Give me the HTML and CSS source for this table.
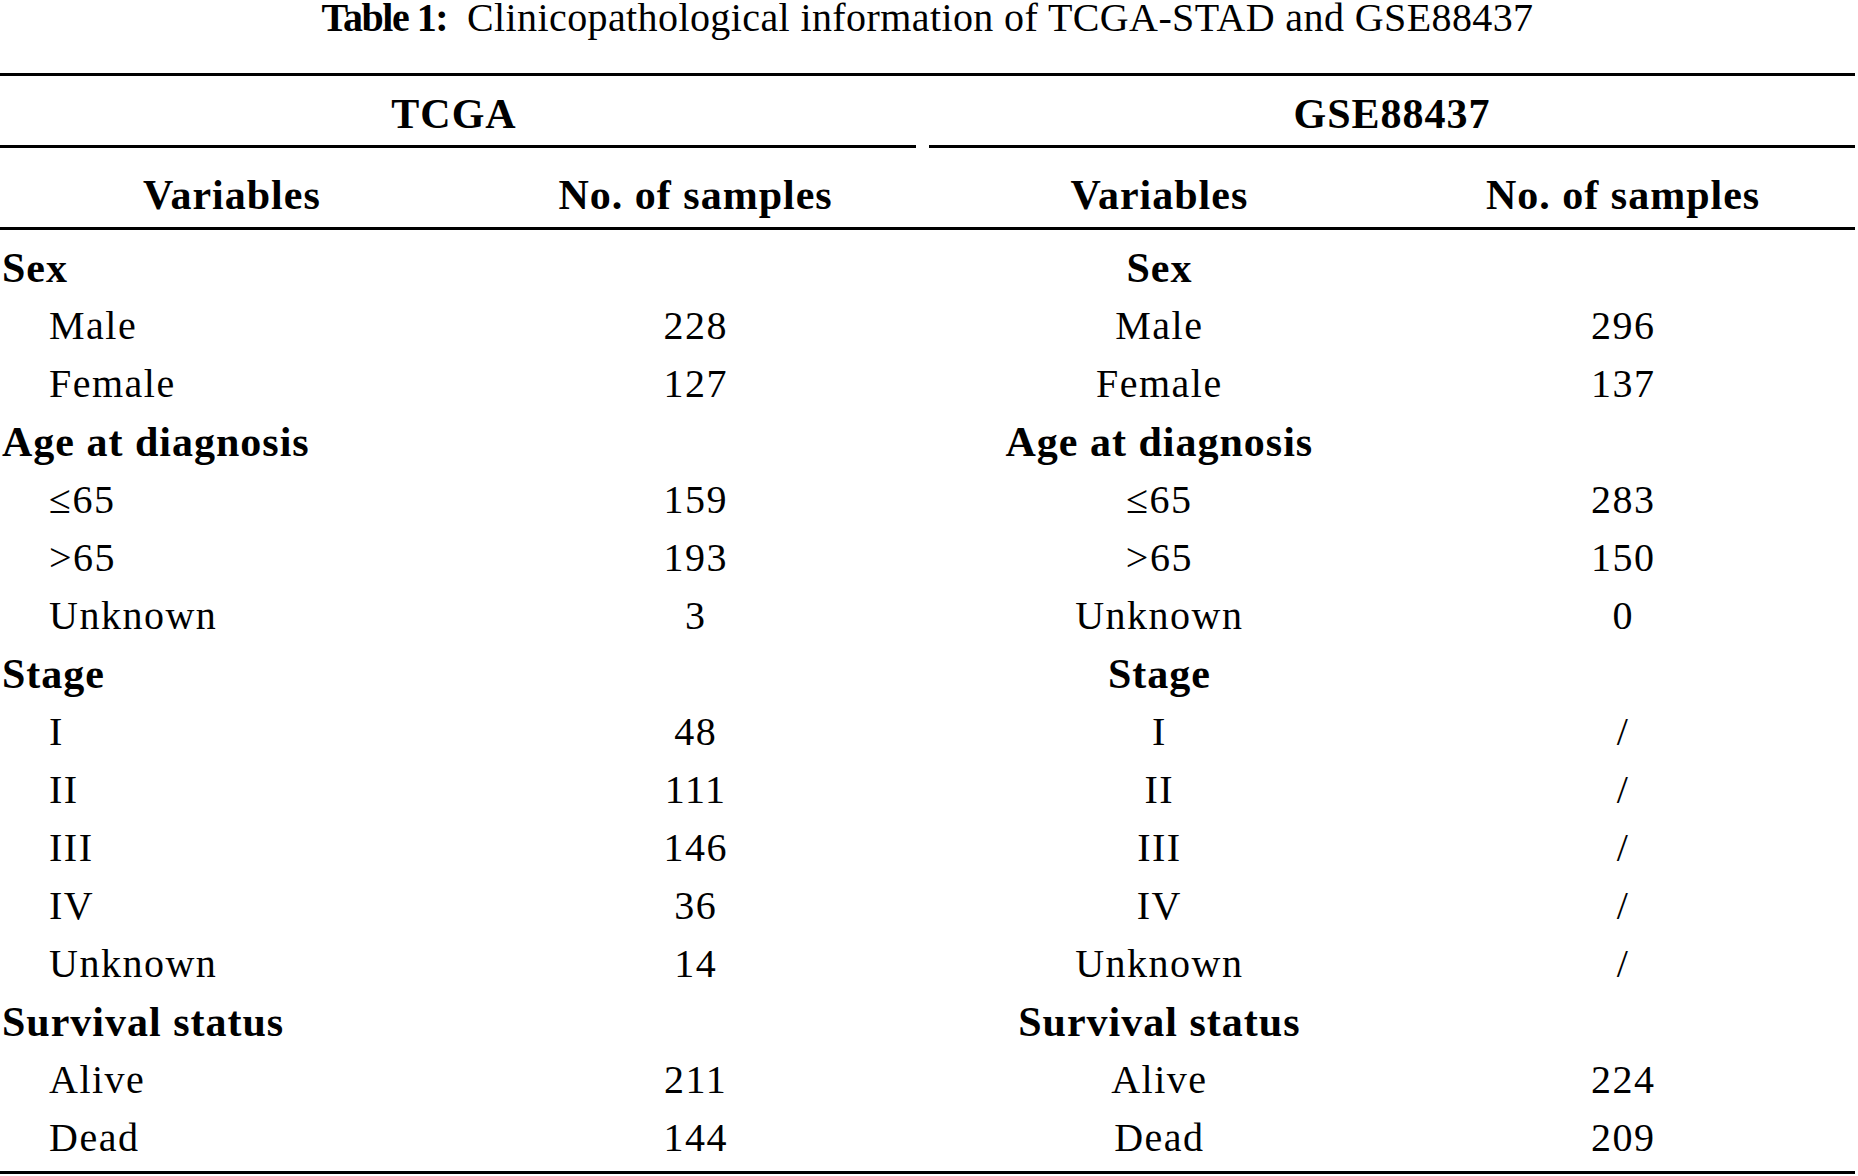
FILE: index.html
```html
<!DOCTYPE html>
<html lang="en">
<head>
<meta charset="utf-8">
<title>Table 1</title>
<link rel="stylesheet" href="styles.css">
</head>
<body>
<div class="page">
  <h1 class="caption"><span class="caption-label">Table 1:</span>Clinicopathological information of TCGA-STAD and GSE88437</h1>
  <div class="table">
    <div class="groups">
      <div class="group group-left">TCGA</div>
      <div class="group group-right">GSE88437</div>
    </div>
    <div class="heads">
      <div class="head">Variables</div>
      <div class="head">No. of samples</div>
      <div class="head">Variables</div>
      <div class="head">No. of samples</div>
    </div>
    <div class="rows">
      <div class="sec">Sex</div><div></div><div class="sec center">Sex</div><div></div>
      <div class="sub">Male</div><div class="num">228</div><div class="center">Male</div><div class="num">296</div>
      <div class="sub">Female</div><div class="num">127</div><div class="center">Female</div><div class="num">137</div>
      <div class="sec">Age at diagnosis</div><div></div><div class="sec center">Age at diagnosis</div><div></div>
      <div class="sub">≤65</div><div class="num">159</div><div class="center">≤65</div><div class="num">283</div>
      <div class="sub">&gt;65</div><div class="num">193</div><div class="center">&gt;65</div><div class="num">150</div>
      <div class="sub">Unknown</div><div class="num">3</div><div class="center">Unknown</div><div class="num">0</div>
      <div class="sec">Stage</div><div></div><div class="sec center">Stage</div><div></div>
      <div class="sub">I</div><div class="num">48</div><div class="center">I</div><div class="num">/</div>
      <div class="sub">II</div><div class="num">111</div><div class="center">II</div><div class="num">/</div>
      <div class="sub">III</div><div class="num">146</div><div class="center">III</div><div class="num">/</div>
      <div class="sub">IV</div><div class="num">36</div><div class="center">IV</div><div class="num">/</div>
      <div class="sub">Unknown</div><div class="num">14</div><div class="center">Unknown</div><div class="num">/</div>
      <div class="sec">Survival status</div><div></div><div class="sec center">Survival status</div><div></div>
      <div class="sub">Alive</div><div class="num">211</div><div class="center">Alive</div><div class="num">224</div>
      <div class="sub">Dead</div><div class="num">144</div><div class="center">Dead</div><div class="num">209</div>
    </div>
  </div>
</div>
</body>
</html>
```

FILE: styles.css
```css
html, body {
  margin: 0;
  padding: 0;
  background: #ffffff;
}

body {
  font-family: "Liberation Serif", "Times New Roman", serif;
  color: #000000;
}

.page {
  width: 1855px;
}

.caption {
  margin: 0 0 38px 0;
  font-size: 40px;
  font-weight: normal;
  line-height: 35px;
  height: 35px;
  text-align: center;
  letter-spacing: 0.4px;
  white-space: nowrap;
}

.caption-label {
  font-weight: bold;
  letter-spacing: -1.5px;
  margin-right: 20px;
}

.table {
  border-top: 3px solid #000;
  font-size: 40px;
  line-height: 58px;
  letter-spacing: 1.5px;
}

.groups {
  display: grid;
  grid-template-columns: 916px 1fr;
  column-gap: 13px;
  padding-top: 9px;
}

.group {
  font-size: 42px;
  font-weight: bold;
  letter-spacing: 1px;
  text-align: center;
  height: 58px;
  padding-bottom: 2px;
  border-bottom: 3px solid #000;
}

.group-left {
  padding-right: 8px;
}

.heads {
  display: grid;
  grid-template-columns: repeat(4, 1fr);
  padding: 18px 0 3px 0;
  border-bottom: 3px solid #000;
}

.head {
  font-size: 42px;
  font-weight: bold;
  letter-spacing: 1px;
  text-align: center;
  height: 58px;
}

.rows {
  display: grid;
  grid-template-columns: repeat(4, 1fr);
  grid-auto-rows: 58px;
  padding: 9px 0 4px 0;
  border-bottom: 3px solid #000;
}

.rows > div {
  white-space: nowrap;
}

.sec {
  font-size: 42px;
  font-weight: bold;
  letter-spacing: 1px;
  padding-left: 2px;
}

.sec.center {
  padding-left: 0;
}

.sub {
  padding-left: 49px;
}

.center,
.num {
  text-align: center;
}
```
